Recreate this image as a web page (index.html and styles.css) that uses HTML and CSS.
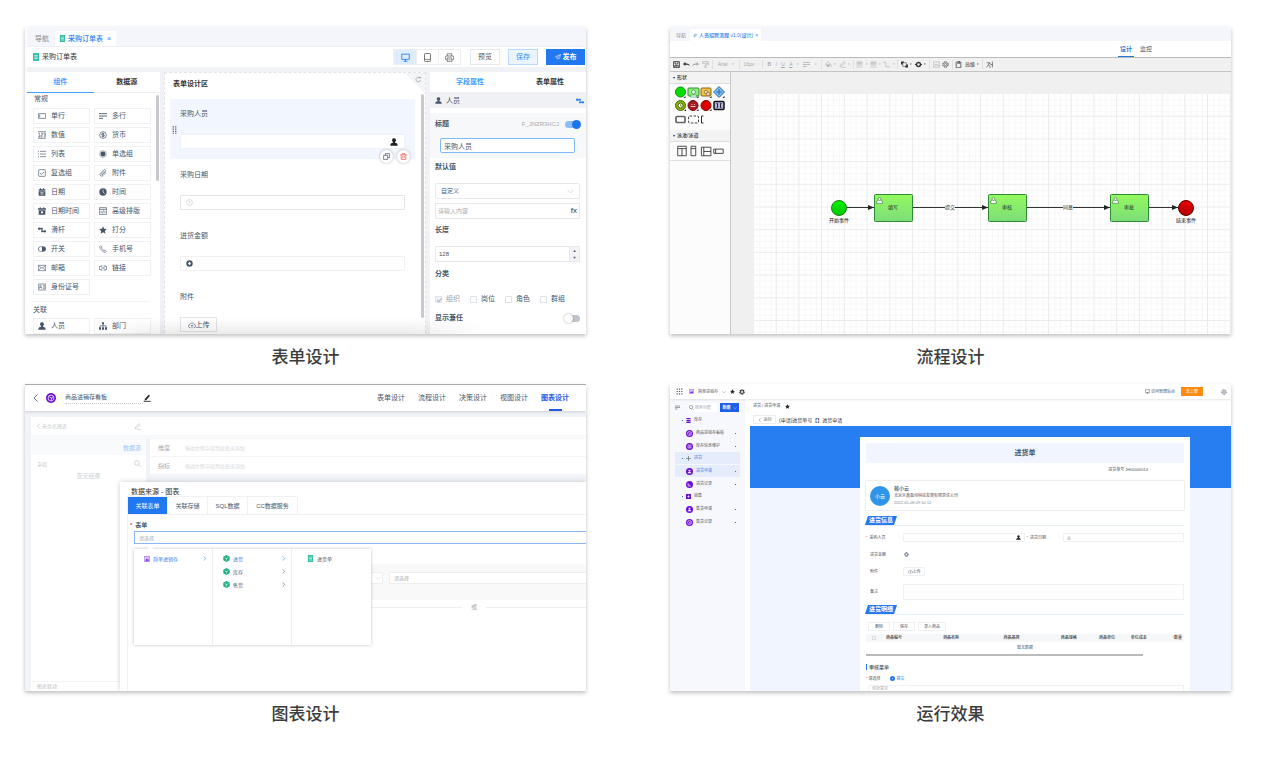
FILE: index.html
```html
<!DOCTYPE html>
<html lang="zh-CN">
<head>
    <meta charset="UTF-8">
    <meta name="viewport" content="width=device-width, initial-scale=1.0">
    <title>低代码平台</title>
    <link rel="stylesheet" href="styles.css">
</head>
<body>
    <!-- icon set -->
    <svg class="sprite" aria-hidden="true">
        <symbol id="doc" viewBox="0 0 12 12"><path d="M1.500 0h9v12h-9z" fill="#36bfa5"/><path d="M3.500 3.500h5M3.500 6h5M3.500 8.500h5" stroke="#fff"/></symbol>
        <symbol id="single" viewBox="0 0 12 12"><path d="M.5 2.500h11v7H.5zM2.500 4v4" fill="none" stroke="currentColor"/></symbol>
        <symbol id="multi" viewBox="0 0 12 12"><path d="M0 2.500h12M0 6h12M0 9.500h6" stroke="currentColor" stroke-width="1.300"/></symbol>
        <symbol id="number" viewBox="0 0 12 12"><path d="M.5 3h1.500v6M0 9h3.500M4.500 3h2.500v3H4.500v3H7M8.500 3H11v6H8.500M9 6h2M0 1h12M0 11h12" fill="none" stroke="currentColor" stroke-width=".9"/></symbol>
        <symbol id="money" viewBox="0 0 12 12"><circle cx="6" cy="6" r="5" fill="none" stroke="currentColor"/><path d="M8 4H5a1 1 0 0 0 0 2h2a1 1 0 0 1 0 2H4M6 2.500v7" fill="none" stroke="currentColor" stroke-width="1.200"/></symbol>
        <symbol id="list" viewBox="0 0 12 12"><path d="M3 2h9M3 6h9M3 10h9M0 2h1.500M0 6h1.500M0 10h1.500" stroke="currentColor"/></symbol>
        <symbol id="radio" viewBox="0 0 12 12"><circle cx="6" cy="6" r="5" fill="none" stroke="currentColor" stroke-width=".7"/><circle cx="6" cy="6" r="3.700" fill="currentColor"/></symbol>
        <symbol id="check" viewBox="0 0 12 12"><rect x="1" y="1" width="10" height="10" rx="1" fill="none" stroke="currentColor"/><path d="M3 6l2.200 2L9 4.500" fill="none" stroke="currentColor"/></symbol>
        <symbol id="clip" viewBox="0 0 12 12"><path d="M10.500 5L6 9.800a2.500 2.500 0 0 1-3.800-3.300L7 1.600a1.700 1.700 0 0 1 2.600 2.200L5.200 8.300a.8.8 0 0 1-1.200-1L7.800 3.500" fill="none" stroke="currentColor"/></symbol>
        <symbol id="date" viewBox="0 0 12 12"><path d="M1 2h2V.5h1.500V2h3V.5H9V2h2v2H1zM1 5h10v6.500H1z" fill="currentColor"/><path d="M3.500 7h5M3.500 9h5" stroke="#fff"/></symbol>
        <symbol id="datetime" viewBox="0 0 12 12"><path d="M0 2h2.500V.5H4V2h4V.5h1.500V2H12v2H0zM1 5h10v6.500H1z" fill="currentColor"/><circle cx="6" cy="8" r="1.700" fill="#fff"/></symbol>
        <symbol id="clock" viewBox="0 0 12 12"><circle cx="6" cy="6" r="5.500" fill="currentColor"/><path d="M6 2.500V6l2.500 2.500" fill="none" stroke="#fff"/></symbol>
        <symbol id="clock-line" viewBox="0 0 12 12"><circle cx="6" cy="6" r="5" fill="none" stroke="currentColor"/><path d="M6 3v3.500h2.500" fill="none" stroke="currentColor"/></symbol>
        <symbol id="html" viewBox="0 0 12 12"><path d="M.5 1h11v10H.5zM.5 3.500h11M4 5.500L2.500 7.300 4 9M8 5.500l1.500 1.800L8 9M6.700 5l-1.200 4.500" fill="none" stroke="currentColor"/></symbol>
        <symbol id="slider" viewBox="0 0 12 12"><path d="M0 4h7M5 8h7" stroke="currentColor" stroke-width="1.800"/><circle cx="2" cy="4" r="1.800" fill="currentColor"/><path d="M5 2.500h2v3H5zM5 6.500h2v3H5z" fill="currentColor"/><circle cx="10" cy="8" r="1.800" fill="currentColor"/></symbol>
        <symbol id="star" viewBox="0 0 12 12"><path d="M6 .3l1.700 3.900 4.200.4-3.200 2.800 1 4.200L6 9.400l-3.700 2.200 1-4.200L.1 4.600l4.200-.4z" fill="currentColor"/></symbol>
        <symbol id="switch" viewBox="0 0 12 12"><rect x=".5" y="2.500" width="11" height="7" rx="3.500" fill="none" stroke="currentColor"/><path d="M6 2.500h2a3.500 3.500 0 0 1 0 7H6z" fill="currentColor"/></symbol>
        <symbol id="phone" viewBox="0 0 12 12"><path d="M1 2.500L2.500 1l2 2.200-1 1.300 4 4 1.300-1 2.200 2-1.500 1.500C6 11 1 6 1 2.500z" fill="none" stroke="currentColor" stroke-width=".9"/></symbol>
        <symbol id="mail" viewBox="0 0 12 12"><path d="M.5 2h11v8H.5zM.5 2L6 6.500 11.500 2M.5 10l4-4.500M11.500 10l-4-4.500" fill="none" stroke="currentColor" stroke-width=".9"/></symbol>
        <symbol id="link" viewBox="0 0 12 12"><path d="M5 9H3a3 3 0 0 1 0-6h2M7 3h2a3 3 0 0 1 0 6H7M3.500 6h5" fill="none" stroke="currentColor" stroke-width="1.200"/></symbol>
        <symbol id="idcard" viewBox="0 0 12 12"><path d="M.5 1.500h11v9H.5zM7.500 4h3M7.500 6h3M7.500 8h3M2 8.500V6.500h3.500v2" fill="none" stroke="currentColor" stroke-width=".9"/><circle cx="3.700" cy="4.500" r="1.200" fill="none" stroke="currentColor" stroke-width=".8"/></symbol>
        <symbol id="person" viewBox="0 0 12 12"><path d="M6 .5a3 3 0 0 1 1.500 5.600v1.200C10 7.700 11.500 8.500 11.500 11.500H.5C.5 8.500 2 7.700 4.500 7.300V6.100A3 3 0 0 1 6 .5z" fill="currentColor"/></symbol>
        <symbol id="tree" viewBox="0 0 12 12"><path d="M4.500.5h3v3h-3zM0 8h3v3.500H0zM4.500 8h3v3.500h-3zM9 8h3v3.500H9z" fill="currentColor"/><path d="M6 3v5M1.500 8V5.700h9V8" fill="none" stroke="currentColor"/></symbol>
        <symbol id="monitor" viewBox="0 0 12 12"><path d="M1 1.500h10v7H1z" fill="none" stroke="currentColor" stroke-width="1.200"/><path d="M6 8v3M3.500 11h5" stroke="currentColor" stroke-width="1.200"/></symbol>
        <symbol id="tablet" viewBox="0 0 12 12"><rect x="2" y=".7" width="8" height="10.500" rx="1" fill="none" stroke="currentColor" stroke-width="1.200"/><path d="M2 8.500h8" stroke="currentColor"/></symbol>
        <symbol id="printer" viewBox="0 0 12 12"><path d="M3 4V1h6v3M3 9H1.500a1 1 0 0 1-1-1V5a1 1 0 0 1 1-1h9a1 1 0 0 1 1 1v3a1 1 0 0 1-1 1H9M3 6.500h6v5H3zM4.500 9h3" fill="none" stroke="currentColor"/></symbol>
        <symbol id="send" viewBox="0 0 12 12"><path d="M11 1L1 5.500l3 1.500 1 3.500 2-2.500 2 1zM11 1L4 7" fill="none" stroke="currentColor"/></symbol>
        <symbol id="copy" viewBox="0 0 12 12"><path d="M1 4h7v7H1zM4 4V1h7v7H8" fill="none" stroke="currentColor" stroke-width="1.200"/></symbol>
        <symbol id="trash" viewBox="0 0 12 12"><path d="M.5 3h11M4 3V1h4v2M2 3v8h8V3M4.700 5v4M7.300 5v4" fill="none" stroke="currentColor" stroke-width="1.200"/></symbol>
        <symbol id="cloud" viewBox="0 0 12 12"><path d="M3.500 10a2.500 2.500 0 0 1-.5-5 3.200 3.200 0 0 1 6 0 2.500 2.500 0 0 1-.5 5M6 11V6M4.500 7.500L6 6l1.500 1.500" fill="none" stroke="currentColor" stroke-width=".9"/></symbol>
        <symbol id="coin" viewBox="0 0 12 12"><circle cx="6" cy="6" r="5.500" fill="currentColor"/><path d="M6 3l2.500 3L6 9 3.500 6z" fill="#fff"/></symbol>
        <symbol id="down" viewBox="0 0 12 12"><path d="M1 3.500l5 5 5-5" fill="none" stroke="currentColor"/></symbol>
        <symbol id="right" viewBox="0 0 12 12"><path d="M4 1l5 5-5 5" fill="none" stroke="currentColor" stroke-width="1.400"/></symbol>
        <symbol id="left" viewBox="0 0 12 12"><path d="M8.500.5L3 6l5.500 5.500" fill="none" stroke="currentColor" stroke-width="1.200"/></symbol>
        <symbol id="refresh" viewBox="0 0 12 12"><path d="M7.500 2.500A4 4 0 1 0 9.500 7M8.500 1v3.500M7 2.800h4" fill="none" stroke="currentColor" stroke-width="1.200"/></symbol>
        <symbol id="drag" viewBox="0 0 8 12"><path d="M1 0h2v2H1zM5 0h2v2H5zM1 3.500h2v2H1zM5 3.500h2v2H5zM1 7h2v2H1zM5 7h2v2H5zM1 10.500h2v1.500H1zM5 10.500h2v1.500H5z" fill="currentColor"/></symbol>
        <symbol id="pen" viewBox="0 0 12 12"><path d="M8.500 1l2 1.800L5 9l-2.800.8L3 7z" fill="currentColor"/><path d="M1 11h10.500" stroke="currentColor" stroke-width="1.300"/></symbol>
        <symbol id="pen-line" viewBox="0 0 12 12"><path d="M8.500 1l2 1.800L4.500 9l-2.800.8.800-2.800zM5 11h6.500" fill="none" stroke="currentColor"/></symbol>
        <symbol id="search" viewBox="0 0 12 12"><circle cx="5" cy="5" r="4" fill="none" stroke="currentColor" stroke-width="1.200"/><path d="M8 8l3.500 3.500" stroke="currentColor" stroke-width="1.200"/></symbol>
        <symbol id="purple" viewBox="0 0 12 12"><circle cx="6" cy="6" r="6" fill="#6a0fd0"/><circle cx="6" cy="6" r="3.500" fill="none" stroke="#fff" stroke-width=".9"/><path d="M4 4.500l2.500 1.500V9M6.500 6L9 4.500" fill="none" stroke="#fff" stroke-width=".9"/></symbol>
        <symbol id="purple-person" viewBox="0 0 12 12"><circle cx="6" cy="6" r="6" fill="#6a0fd0"/><circle cx="6" cy="4.500" r="1.700" fill="#fff"/><path d="M3 9c0-3 6-3 6 0z" fill="#fff"/></symbol>
        <symbol id="purple-doc" viewBox="0 0 12 12"><circle cx="6" cy="6" r="6" fill="#6a0fd0"/><path d="M3.500 3.500h5v5h-5zM5 5.500h2M5 7h2" fill="none" stroke="#fff"/></symbol>
        <symbol id="purple-log" viewBox="0 0 12 12"><circle cx="6" cy="6" r="6" fill="#6a0fd0"/><path d="M3.500 3.500v5h5M5 7.500v-2M7 7.500v-1" fill="none" stroke="#fff"/></symbol>
        <symbol id="stack" viewBox="0 0 12 12"><path d="M1 0h10v3H1zM1 4.500h10v3H1zM1 9h10v3H1z" fill="#6a0fd0"/></symbol>
        <symbol id="app" viewBox="0 0 12 12"><path d="M.5 1h11v10H.5z" fill="#dcc4fa" stroke="#8f42ea"/><path d="M2.500 9.500l2.500-4 1.500 2L8 5l2 4.500z" fill="#7a22e0"/></symbol>
        <symbol id="node" viewBox="0 0 12 12"><path d="M6 0l5.500 3v6L6 12 .5 9V3z" fill="#20b07e"/><path d="M3 4.500L6 6l3-1.500M6 6v3.500" fill="none" stroke="#fff"/></symbol>
        <symbol id="gear" viewBox="0 0 12 12"><circle cx="6" cy="6" r="4.300" fill="none" stroke="currentColor" stroke-width="2.200" stroke-dasharray="2.400 1"/><circle cx="6" cy="6" r="3" fill="none" stroke="currentColor" stroke-width="1.400"/></symbol>
        <symbol id="gear-line" viewBox="0 0 12 12"><circle cx="6" cy="6" r="4.500" fill="none" stroke="currentColor" stroke-width="1.600" stroke-dasharray="2.600 .9"/><circle cx="6" cy="6" r="2" fill="none" stroke="currentColor"/></symbol>
        <symbol id="grid9" viewBox="0 0 12 12"><path d="M1 1h2v2H1zM5 1h2v2H5zM9 1h2v2H9zM1 5h2v2H1zM5 5h2v2H5zM9 5h2v2H9zM1 9h2v2H1zM5 9h2v2H5zM9 9h2v2H9z" fill="currentColor"/></symbol>
        <symbol id="flow" viewBox="0 0 12 12"><path d="M3 11V4h6M6 1l3 3-3 3M1 7h7" fill="none" stroke="currentColor"/></symbol>
        <symbol id="save" viewBox="0 0 12 12"><path d="M1 1h10v10H1zM3.500 1v4h5V1M3 11V7.500h6V11M5.500 8v2.500" fill="none" stroke="currentColor" stroke-width="1.400"/></symbol>
        <symbol id="undo" viewBox="0 0 12 12"><path d="M0 5l4-3.500v2.300c4 0 7 1.200 8 5.200-2-2-4-2.500-8-2.500v2z" fill="currentColor"/></symbol>
        <symbol id="redo" viewBox="0 0 12 12"><path d="M12 5L8 1.500v2.300c-4 0-7 1.200-8 5.200 2-2 4-2.500 8-2.500v2z" fill="currentColor"/></symbol>
        <symbol id="brush" viewBox="0 0 12 12"><path d="M1 1h9v3H1zM10 2.500h1.500v4H6v1M5 7.500h2V12H5z" fill="none" stroke="currentColor"/></symbol>
        <symbol id="bucket" viewBox="0 0 12 12"><path d="M5 1l5 5-4.500 4.500L1 6zM10.500 7.500l1 3" fill="none" stroke="currentColor"/><path d="M1.500 6h8L5.500 10z" fill="currentColor"/></symbol>
        <symbol id="dashes" viewBox="0 0 12 12"><path d="M1 2h10M1 5h10" stroke="currentColor" stroke-width="1.500"/><path d="M1 8h10M1 10.500h10" stroke="currentColor" stroke-dasharray="2 1"/></symbol>
        <symbol id="elbow" viewBox="0 0 12 12"><path d="M0 2h5v8h7" fill="none" stroke="currentColor"/></symbol>
        <symbol id="front" viewBox="0 0 12 12"><path d="M0 1h5v5H0zM7 6h5v5H7z" fill="currentColor"/><path d="M3 3h6v6H3z" fill="#fff" stroke="currentColor"/></symbol>
        <symbol id="target" viewBox="0 0 12 12"><circle cx="6" cy="6" r="3.500" fill="none" stroke="currentColor" stroke-width="2.600"/><path d="M0 6h3M9 6h3" stroke="currentColor" stroke-width="2"/></symbol>
        <symbol id="image" viewBox="0 0 12 12"><path d="M.5 1.500h11v9H.5zM2 9l3-4 2 3 1.500-2L11 9" fill="none" stroke="currentColor"/></symbol>
        <symbol id="paste" viewBox="0 0 12 12"><path d="M2 2h8v9.500H2zM4 .5h4V4H4" fill="none" stroke="currentColor" stroke-width="1.200"/></symbol>
        <symbol id="run" viewBox="0 0 12 12"><path d="M1 3h5l-2 4 3 2v3M4 7l-3 4M6 3l2 3h3M11 1v10" fill="none" stroke="currentColor"/></symbol>
        <symbol id="user-task" viewBox="0 0 12 12"><path d="M4 5.500L1 7.500V11h10V7.500L8 5.500" fill="#fff" stroke="#2d6b33"/><circle cx="6" cy="3.500" r="2.500" fill="#fff" stroke="#2d6b33"/></symbol>
    </svg>

    <main class="gallery">
        <figure class="feature">
            <div class="shot form-designer">
                <div class="tabbar">
                    <span class="tab">导航</span>
                    <span class="tab active"><svg class="ico7"><use href="#doc"/></svg>采购订单表<i>×</i></span>
                </div>
                <header class="titlebar">
                    <svg class="ico8"><use href="#doc"/></svg>
                    <span class="name">采购订单表</span>
                    <div class="devices">
                        <button class="on" aria-label="桌面"><svg class="ico9"><use href="#monitor"/></svg></button>
                        <button aria-label="平板"><svg class="ico9"><use href="#tablet"/></svg></button>
                        <button aria-label="打印"><svg class="ico9"><use href="#printer"/></svg></button>
                    </div>
                    <button class="btn">预览</button>
                    <button class="btn light">保存</button>
                    <button class="btn primary"><svg class="ico6"><use href="#send"/></svg>发布</button>
                </header>
                <div class="workspace">
                    <aside class="components">
                        <div class="panel-tabs"><a href="#" class="on">组件</a><a href="#">数据源</a></div>
                        <h4>常规</h4>
                        <div class="widgets">
                            <span><svg><use href="#single"/></svg>单行</span>
                            <span><svg><use href="#multi"/></svg>多行</span>
                            <span><svg><use href="#number"/></svg>数值</span>
                            <span><svg><use href="#money"/></svg>货币</span>
                            <span><svg><use href="#list"/></svg>列表</span>
                            <span><svg><use href="#radio"/></svg>单选组</span>
                            <span><svg><use href="#check"/></svg>复选组</span>
                            <span><svg><use href="#clip"/></svg>附件</span>
                            <span><svg><use href="#date"/></svg>日期</span>
                            <span><svg><use href="#clock"/></svg>时间</span>
                            <span><svg><use href="#datetime"/></svg>日期时间</span>
                            <span><svg><use href="#html"/></svg>高级排版</span>
                            <span><svg><use href="#slider"/></svg>滑杆</span>
                            <span><svg><use href="#star"/></svg>打分</span>
                            <span><svg><use href="#switch"/></svg>开关</span>
                            <span><svg><use href="#phone"/></svg>手机号</span>
                            <span><svg><use href="#mail"/></svg>邮箱</span>
                            <span><svg><use href="#link"/></svg>链接</span>
                            <span><svg><use href="#idcard"/></svg>身份证号</span>
                        </div>
                        <h4 class="second">关联</h4>
                        <div class="widgets">
                            <span><svg><use href="#person"/></svg>人员</span>
                            <span><svg><use href="#tree"/></svg>部门</span>
                        </div>
                        <i class="scroll"></i>
                    </aside>
                    <section class="canvas">
                        <h3>表单设计区</h3>
                        <div class="field selected">
                            <svg class="grip"><use href="#drag"/></svg>
                            <label for="buyer">采购人员</label>
                            <div class="box"><input id="buyer"><svg class="ico8 end"><use href="#person"/></svg></div>
                            <div class="tools">
                                <button aria-label="复制"><svg class="ico7"><use href="#copy"/></svg></button>
                                <button class="del" aria-label="删除"><svg class="ico7"><use href="#trash"/></svg></button>
                            </div>
                        </div>
                        <div class="field">
                            <label for="buydate">采购日期</label>
                            <div class="box"><svg class="ico7 pale"><use href="#clock-line"/></svg><input id="buydate"></div>
                        </div>
                        <div class="field">
                            <label for="amount">进货金额</label>
                            <div class="box thin"><svg class="ico7"><use href="#coin"/></svg><input id="amount"></div>
                        </div>
                        <div class="field">
                            <label for="upload">附件</label>
                            <button id="upload" class="upload"><svg class="ico8"><use href="#cloud"/></svg>上传</button>
                        </div>
                        <span class="corner"><svg class="ico7"><use href="#refresh"/></svg></span>
                        <i class="scroll"></i>
                    </section>
                    <aside class="props">
                        <div class="panel-tabs"><a href="#" class="on">字段属性</a><a href="#">表单属性</a></div>
                        <div class="who"><svg class="ico7"><use href="#person"/></svg>人员<svg class="ico8 swap"><use href="#slider"/></svg></div>
                        <div class="title-prop">
                            <div class="line"><label for="title">标题</label><small>F_JNZR3HCJ</small><input type="checkbox" class="toggle" checked aria-label="显示标题"></div>
                            <input id="title" value="采购人员">
                        </div>
                        <div class="prop-list">
                            <label for="default">默认值</label>
                            <div class="selectbox"><select id="default"><option>自定义</option></select><svg class="ico7"><use href="#down"/></svg></div>
                            <div class="fxbox"><input placeholder="请输入内容" aria-label="内容"><b>fx</b></div>
                            <label for="len">长度</label>
                            <div class="numbox"><input id="len" value="128"><span><i>▲</i><i>▼</i></span></div>
                            <h5>分类</h5>
                            <div class="checks">
                                <label class="off"><input type="checkbox" checked disabled>组织</label>
                                <label><input type="checkbox">岗位</label>
                                <label><input type="checkbox">角色</label>
                                <label><input type="checkbox">群组</label>
                            </div>
                            <div class="line"><label for="both">显示兼任</label><input id="both" type="checkbox" class="toggle"></div>
                        </div>
                    </aside>
                </div>
            </div>
            <figcaption>表单设计</figcaption>
        </figure>

        <figure class="feature">
            <div class="shot flow-designer">
                <div class="tabbar">
                    <span class="tab">导航</span>
                    <span class="tab active"><svg class="ico5"><use href="#flow"/></svg>人员招聘流程 v1.0(设计)<i>×</i></span>
                </div>
                <nav class="modes"><a href="#" class="on">设计</a><a href="#">监控</a></nav>
                <div class="toolbar">
                    <div class="g42"><svg class="dark"><use href="#save"/></svg><svg class="dark"><use href="#undo"/></svg><svg><use href="#redo"/></svg><svg><use href="#brush"/></svg></div>
                    <div class="g27"><span>Arial</span><i>▾</i></div>
                    <div class="g22"><span>16px</span><i>⁝</i></div>
                    <div class="g59"><b>B</b><em>I</em><u>U</u><u>A</u><i>▾</i><svg><use href="#multi"/></svg><i>▾</i></div>
                    <div class="g32"><svg><use href="#bucket"/></svg><i>▾</i><svg><use href="#pen-line"/></svg><i>▾</i></div>
                    <div class="g44"><svg><use href="#dashes"/></svg><i>▾</i><svg><use href="#dashes"/></svg><i>▾</i><svg><use href="#elbow"/></svg><i>▾</i></div>
                    <div class="g32 dark"><svg><use href="#front"/></svg><i>▾</i><svg><use href="#target"/></svg><i>▾</i></div>
                    <div class="g22"><svg><use href="#image"/></svg><svg class="dark"><use href="#gear-line"/></svg></div>
                    <div class="g30 dark"><svg><use href="#paste"/></svg><span>高级</span><i>▾</i></div>
                    <div class="dark"><svg><use href="#run"/></svg></div>
                </div>
                <div class="stage">
                    <aside class="palette">
                        <h4>形状</h4>
                        <svg class="shapes" viewBox="0 1 60 46" width="60" height="46">
                            <g stroke-width="1">
                                <circle cx="10.500" cy="9" r="5" fill="#00e000" stroke="#118611"/>
                                <rect x="18" y="5" width="11" height="8" rx="1" fill="#8af27b" stroke="#2c8c33"/><circle cx="23.500" cy="9" r="2" fill="#fff" stroke="#2c8c33" stroke-width=".7"/><path d="M20.500 14v-2l6 0v2z" fill="#fff" stroke="#2c8c33" stroke-width=".6"/>
                                <rect x="31" y="5" width="10" height="8" rx="1" fill="#f4c445" stroke="#8b6414"/><circle cx="36" cy="9" r="1.800" fill="#ddd" stroke="#8b6414" stroke-width=".7"/><circle cx="38" cy="11" r="1.800" fill="#ddd" stroke="#8b6414" stroke-width=".7"/>
                                <path d="M49 3.500l5.500 5.500-5.500 5.500L43.500 9z" fill="#7cc0f5" stroke="#2b6ca8"/><path d="M49 6v6M46 9h6" stroke="#2b6ca8"/>
                                <circle cx="10.500" cy="22.500" r="5" fill="#8bb500" stroke="#496800"/><circle cx="10.500" cy="22.500" r="2.500" fill="#fff" stroke="#496800"/><path d="M10.500 21v2H12" fill="none" stroke="#496800" stroke-width=".6"/>
                                <circle cx="23" cy="22.500" r="5" fill="#a81b22" stroke="#6b0c10"/><path d="M20.500 23.500h5M21.500 21.500h1M24 21.500h1" stroke="#f0c0c0"/>
                                <circle cx="36" cy="22.500" r="5" fill="#de0000" stroke="#7c0000"/>
                                <rect x="44" y="18.500" width="10" height="8" rx="1" fill="#b8b6e6" stroke="#111" stroke-width="1.500"/><path d="M46.500 20.500h1v4h-1M51.500 20.500h-1v4h1" fill="none" stroke="#222"/>
                                <rect x="6" y="33.500" width="9" height="6" rx="1" fill="#fff" stroke="#666" stroke-width="1.700"/>
                                <rect x="18.500" y="33" width="10" height="7" rx="1" fill="none" stroke="#444" stroke-dasharray="2.500 1.500"/>
                                <path d="M33.500 33H31.500v7h2" fill="none" stroke="#333"/>
                            </g>
                            <path d="M15.500 13v2h-2zM28.500 13v2h-2zM41.500 13v2h-2zM54.500 13v2h-2zM16 26v2h-2zM28.500 26v2h-2zM41.500 26v2h-2z" fill="#222"/>
                        </svg>
                        <h4>泳池/泳道</h4>
                        <svg class="lanes" viewBox="0 0 60 19" width="60" height="19"><path d="M6.500 4.500h9v10h-9zM6.500 7h9M11 7v7.500M20.500 4.500h5v10h-5zM20.500 7h5M31.500 5.500h10v9h-10zM34 5.500v9M34 10h7.500M44.500 7.500h10v4.500h-10zM46.500 7.500V12" fill="none" stroke="#444"/></svg>
                    </aside>
                    <div class="paper-area">
                        <svg class="paper" width="100%" height="240">
                            <defs>
                                <pattern id="cells" width="22.700" height="22.700" patternUnits="userSpaceOnUse">
                                    <path d="M5.700 0v22.700M11.400 0v22.700M17 0v22.700M0 5.700h22.700M0 11.400h22.700M0 17h22.700" stroke="#f7f7f7"/>
                                    <path d="M22.200 0v22.200H0" fill="none" stroke="#ebebeb"/>
                                </pattern>
                                <linearGradient id="leaf" x2="0" y2="1"><stop offset="0" stop-color="#93f95f"/><stop offset="1" stop-color="#7cdd7a"/></linearGradient>
                                <linearGradient id="go" x2="0" y2="1"><stop offset="0" stop-color="#00f000"/><stop offset="1" stop-color="#00c800"/></linearGradient>
                                <linearGradient id="stop" x2="0" y2="1"><stop offset="0" stop-color="#e80000"/><stop offset="1" stop-color="#b40000"/></linearGradient>
                                <marker id="arrow" viewBox="0 0 6 5" refX="6" refY="2.500" markerWidth="6" markerHeight="5" markerUnits="userSpaceOnUse" orient="auto"><path d="M0 0l6 2.500L0 5z" fill="#222"/></marker>
                            </defs>
                            <rect width="100%" height="240" fill="#fff"/>
                            <rect width="100%" height="240" fill="url(#cells)"/>
                            <g stroke="#333">
                                <path d="M93 113.500h27" marker-end="url(#arrow)"/>
                                <path d="M158 113.500h76" marker-end="url(#arrow)"/>
                                <path d="M272 113.500h84" marker-end="url(#arrow)"/>
                                <path d="M394 113.500h30" marker-end="url(#arrow)"/>
                            </g>
                            <circle cx="85" cy="114" r="7.500" fill="url(#go)" stroke="#118611"/>
                            <circle cx="432" cy="114" r="7.500" fill="url(#stop)" stroke="#5c0000"/>
                            <g fill="url(#leaf)" stroke="#2f8a36">
                                <rect x="120.500" y="100.500" width="38" height="27" rx="1"/>
                                <rect x="234.500" y="100.500" width="38" height="27" rx="1"/>
                                <rect x="356.500" y="100.500" width="38" height="27" rx="1"/>
                            </g>
                            <use href="#user-task" x="122" y="103" width="7" height="7"/>
                            <use href="#user-task" x="236" y="103" width="7" height="7"/>
                            <use href="#user-task" x="358" y="103" width="7" height="7"/>
                            <path d="M191 110h10v7h-10zM309 110h10v7h-10z" fill="#fff"/>
                            <g class="labels">
                                <text x="139" y="115">填写</text>
                                <text x="253" y="115">审核</text>
                                <text x="375" y="115">审批</text>
                                <text x="196" y="115">提交</text>
                                <text x="314" y="115">同意</text>
                                <text x="85" y="128">开始事件</text>
                                <text x="432" y="128">结束事件</text>
                            </g>
                        </svg>
                    </div>
                </div>
            </div>
            <figcaption>流程设计</figcaption>
        </figure>

        <figure class="feature">
            <div class="shot chart-designer">
                <header>
                    <svg class="ico8"><use href="#left"/></svg>
                    <svg class="ico10"><use href="#purple"/></svg>
                    <span class="name">商品进销存看板</span>
                    <svg class="ico8 black"><use href="#pen"/></svg>
                    <nav><a href="#">表单设计</a><a href="#">流程设计</a><a href="#">决策设计</a><a href="#">视图设计</a><a href="#" class="on">图表设计</a></nav>
                </header>
                <div class="chart-body">
                    <div class="chart-name"><svg class="ico6"><use href="#left"/></svg><span>未命名图表</span><svg class="ico7"><use href="#pen-line"/></svg></div>
                    <div class="chart-cols">
                        <div class="source">
                            <div class="src-head">数据源</div>
                            <div class="src-field">字段<svg class="ico7"><use href="#search"/></svg></div>
                            <p>查无结果</p>
                            <div class="src-foot">图表联动</div>
                        </div>
                        <div class="dims">
                            <div><b>维度</b>拖动左侧字段到此处来添加</div>
                            <div><b>指标</b>拖动左侧字段到此处来添加</div>
                        </div>
                    </div>
                </div>
                <section class="dialog">
                    <h3>数据来源 - 图表</h3>
                    <div class="inner">
                        <div class="src-tabs"><button class="on">关联表单</button><button>关联存储</button><button>SQL数据</button><button class="wide">CC数据服务</button></div>
                        <label for="form"><i>*</i>表单</label>
                        <input id="form" class="pick" placeholder="请选择">
                        <div class="filter">
                            <select aria-label="条件"><option></option></select><svg class="ico6"><use href="#down"/></svg>
                            <input placeholder="请选择" aria-label="值">
                        </div>
                        <div class="or"><span>或</span></div>
                        <div class="cascade">
                            <ul><li class="on"><svg class="ico6"><use href="#app"/></svg>简单进销存<svg class="ico5"><use href="#right"/></svg></li></ul>
                            <ul>
                                <li class="on"><svg class="ico7"><use href="#node"/></svg>进货<svg class="ico5"><use href="#right"/></svg></li>
                                <li><svg class="ico7"><use href="#node"/></svg>库存<svg class="ico5"><use href="#right"/></svg></li>
                                <li><svg class="ico7"><use href="#node"/></svg>售货<svg class="ico5"><use href="#right"/></svg></li>
                            </ul>
                            <ul class="last"><li><svg class="ico7"><use href="#doc"/></svg>进货单</li></ul>
                        </div>
                    </div>
                </section>
            </div>
            <figcaption>图表设计</figcaption>
        </figure>

        <figure class="feature">
            <div class="shot runtime">
                <header>
                    <svg class="ico7"><use href="#grid9"/></svg>
                    <svg class="ico5"><use href="#app"/></svg>
                    <span>简单进销存</span>
                    <svg class="ico4"><use href="#down"/></svg>
                    <svg class="ico5 black"><use href="#star"/></svg>
                    <svg class="ico6 black"><use href="#gear"/></svg>
                    <a href="#"><svg class="ico5"><use href="#monitor"/></svg>访问管理后台</a>
                    <button>去上架</button>
                    <svg class="ico6"><use href="#gear-line"/></svg>
                </header>
                <div class="run-body">
                    <aside class="menu">
                        <div class="find">
                            <svg class="ico5"><use href="#multi"/></svg>
                            <div><svg class="ico5"><use href="#search"/></svg><input placeholder="搜索功能" aria-label="搜索"></div>
                            <button>新建<svg class="ico4"><use href="#down"/></svg></button>
                        </div>
                        <ul>
                            <li class="group"><i></i><svg class="ico5"><use href="#stack"/></svg>库存</li>
                            <li><svg class="ico7"><use href="#purple"/></svg>商品进销存看板<i></i></li>
                            <li><svg class="ico7"><use href="#purple-doc"/></svg>库存信息维护<i></i></li>
                            <li class="group on"><i></i><svg class="ico5" viewBox="0 0 12 12"><path d="M6 0v12M0 6h12" stroke="#55617a" stroke-width="1.500"/></svg>进货</li>
                            <li class="on"><svg class="ico7"><use href="#purple-person"/></svg>进货申请<i></i></li>
                            <li><svg class="ico7"><use href="#purple-log"/></svg>进货记录<i></i></li>
                            <li class="group"><i></i><svg class="ico5" viewBox="0 0 12 12"><path d="M0 0h12v12H0z" fill="#6a0fd0"/><path d="M6 3v6M3 6h6" stroke="#fff" stroke-width="1.500"/></svg>销售</li>
                            <li><svg class="ico7"><use href="#purple-person"/></svg>售货申请<i></i></li>
                            <li><svg class="ico7"><use href="#purple"/></svg>售货记录<i></i></li>
                        </ul>
                    </aside>
                    <section class="page">
                        <div class="crumbs">进货 / 进货申请<svg class="ico5 black"><use href="#star"/></svg></div>
                        <div class="page-title"><button><svg class="ico4"><use href="#left"/></svg>返回</button>(申请)进货单号【】进货申请</div>
                        <div class="backdrop">
                            <form class="sheet">
                                <h2>进货单</h2>
                                <p class="serial">进货单号 JH00000014</p>
                                <div class="user">
                                    <span class="avatar">小云</span>
                                    <div><b>赖小云</b><p>北京炎黄盈动科技发展有限责任公司</p><p class="dim">2022-05-08 09:10:12</p></div>
                                </div>
                                <h3><span>进货信息</span></h3>
                                <div class="rows">
                                    <label for="r1"><i>*</i>采购人员</label>
                                    <div class="inbox"><input id="r1"><svg class="ico5 black"><use href="#person"/></svg></div>
                                    <label for="r2" class="mid"><i>*</i>进货日期</label>
                                    <div class="inbox"><svg class="ico4 pale"><use href="#date"/></svg><input id="r2"></div>
                                    <label>进货金额</label>
                                    <div class="full"><svg class="ico5"><use href="#gear"/></svg></div>
                                    <label for="r4">附件</label>
                                    <div class="full"><button type="button" id="r4"><svg class="ico5"><use href="#cloud"/></svg>上传</button></div>
                                    <label for="r5">备注</label>
                                    <textarea id="r5" class="full"></textarea>
                                </div>
                                <h3 class="detail"><span>进货明细</span></h3>
                                <div class="acts"><button type="button">删除</button><button type="button">保存</button><button type="button" class="wide">录入商品</button></div>
                                <table>
                                    <thead><tr><th class="c1"><input type="checkbox" aria-label="全选"></th><th class="c2">商品编号</th><th class="c3">商品名称</th><th class="c2">商品品牌</th><th class="c4">商品规格</th><th class="c5">商品单位</th><th class="c5">单位成本</th><th class="c6"><i>*</i>数量</th></tr></thead>
                                    <tbody><tr><td colspan="8">暂无数据</td></tr></tbody>
                                </table>
                                <div class="hscroll"></div>
                                <h4>审核菜单</h4>
                                <div class="choose"><i>*</i>请选择<label><input type="radio" name="act" checked>提交</label></div>
                                <textarea class="opinion" placeholder="审批意见" aria-label="审批意见"></textarea>
                            </form>
                        </div>
                    </section>
                </div>
            </div>
            <figcaption>运行效果</figcaption>
        </figure>
    </main>
</body>
</html>
```
FILE: styles.css
```css
* {
    box-sizing: border-box;
}
body {
    margin: 0;
    background: #fff;
    font-family: "Liberation Sans", "Noto Sans CJK SC", sans-serif;
    color: #475669;
}
button, input, select, textarea {
    font-family: inherit;
    font-size: inherit;
    line-height: inherit;
    color: inherit;
    margin: 0;
    padding: 0;
    border: 0;
    border-radius: 0;
    background: none;
    outline: none;
    appearance: none;
    min-width: 0;
    resize: none;
}
a {
    color: inherit;
    text-decoration: none;
}
h2, h3, h4, h5, p, ul, figure {
    margin: 0;
    padding: 0;
    list-style: none;
}
i {
    font-style: normal;
}
svg {
    display: block;
    flex: none;
}
.sprite {
    position: absolute;
    width: 0;
    height: 0;
}
.ico4 { width: 4px; height: 4px; }
.ico5 { width: 5px; height: 5px; }
.ico6 { width: 6px; height: 6px; }
.ico7 { width: 7px; height: 7px; }
.ico8 { width: 8px; height: 8px; }
.ico9 { width: 9px; height: 9px; }
.ico10 { width: 10px; height: 10px; }
.pale { color: #c3c8d0; }
.black { color: #222; }

/* gallery */
.gallery {
    display: grid;
    grid-template-columns: 1fr 1fr;
    column-gap: 84px;
    padding: 27px 49px 16px 25px;
}
.feature {
    display: flex;
    flex-direction: column;
    min-width: 0;
}
.shot {
    position: relative;
    height: 307px;
    overflow: hidden;
    background: #fff;
    box-shadow: 0 2px 4px rgba(0, 0, 0, 0.25);
}
figcaption {
    height: 50px;
    line-height: 48px;
    font-size: 17px;
    font-weight: 500;
    text-align: center;
    color: #3d3d3d;
}
.tabbar {
    display: flex;
    align-items: flex-end;
    background: #f4f6fb;
}
.tab {
    display: flex;
    align-items: center;
    color: #888;
}
.tab.active {
    background: #fff;
    color: #2a80f0;
}

/* form designer */
.form-designer {
    font-size: 7px;
    line-height: 10px;
    border-left: 2px solid #fbfbfc;
}
.form-designer::after {
    content: "";
    position: absolute;
    left: 60px;
    right: 100px;
    bottom: 0;
    height: 16px;
    background: linear-gradient(rgba(0, 0, 0, 0), rgba(0, 0, 0, 0.08));
    mask-image: linear-gradient(90deg, transparent, #000 20%, #000 80%, transparent);
    pointer-events: none;
}
.form-designer .tabbar {
    height: 20px;
    padding-left: 8px;
    gap: 6px;
    border-bottom: 1px solid #eef0f3;
}
.form-designer .tab {
    height: 15px;
}
.form-designer .tab.active {
    gap: 2px;
    padding: 0 5px 0 4px;
    font-weight: 500;
}
.form-designer .tab i {
    margin-left: 2px;
}
.titlebar {
    display: flex;
    align-items: center;
    height: 20px;
    padding: 0 1px 0 5px;
    gap: 8px;
}
.titlebar .name {
    margin-left: -6px;
    flex: 1;
    color: #333;
}
.devices {
    display: flex;
    margin-right: 1px;
    border: 1px solid #eceef1;
}
.devices button {
    display: flex;
    align-items: center;
    justify-content: center;
    width: 22px;
    height: 14px;
    color: #666;
    border-left: 1px solid #eceef1;
}
.devices .on {
    background: #deecff;
    color: #2a80f0;
}
.btn {
    display: flex;
    align-items: center;
    justify-content: center;
    gap: 2px;
    width: 30px;
    height: 16px;
    border: 1px solid #e6e8eb;
    color: #555;
}
.btn.light {
    background: #ecf5ff;
    border-color: #b8d8fc;
    color: #2a90f5;
}
.btn.primary {
    width: 39px;
    background: #2178f0;
    border-color: #2178f0;
    color: #fff;
    font-weight: bold;
}
.workspace {
    display: grid;
    grid-template-columns: 133px 1fr 156px;
    column-gap: 4px;
    height: 267px;
    padding-top: 5px;
    background: #f0f2f5;
}
.components, .canvas, .props {
    position: relative;
    background: #fff;
    min-width: 0;
}
.panel-tabs {
    display: flex;
    height: 21px;
    border-bottom: 1px solid #eceef1;
    line-height: 20px;
    font-weight: bold;
    text-align: center;
    color: #333;
}
.panel-tabs a {
    flex: 1;
    height: 21px;
}
.props .panel-tabs a {
    flex: none;
    width: 80px;
}
.props .panel-tabs {
    overflow: hidden;
}
.panel-tabs .on {
    color: #409eff;
    border-bottom: 1px solid #409eff;
}
.components h4 {
    margin: 1px 0 4px 7px;
    font-weight: normal;
}
.components .second {
    margin: 6px 10px 3px 6px;
    padding-top: 3px;
    border-top: 1px solid #f2f3f5;
}
.widgets {
    display: grid;
    grid-template-columns: 57px 57px;
    grid-auto-rows: 16px;
    gap: 3px 4px;
    margin-left: 6px;
}
.widgets span {
    display: flex;
    align-items: center;
    gap: 5px;
    padding-left: 4px;
    border: 1px solid #f0f1f3;
}
.widgets svg {
    width: 8px;
    height: 8px;
}
.scroll {
    position: absolute;
    width: 3px;
    border-radius: 2px;
    background: #c8c9cc;
}
.components .scroll {
    right: 1px;
    top: 23px;
    height: 86px;
}
.canvas {
    padding: 0 10px 0 5px;
    border: 1px dashed #e0e3e8;
    border-bottom: 0;
}
.canvas h3 {
    height: 26px;
    padding-left: 3px;
    line-height: 22px;
    font-size: 7px;
    color: #333;
}
.field {
    position: relative;
    height: 60px;
    margin-bottom: 1px;
    padding: 10px;
}
.field.selected {
    background: #f2f7ff;
}
.field label {
    display: block;
    margin-bottom: 15px;
}
.box {
    display: flex;
    align-items: center;
    height: 15px;
    padding: 0 6px 0 5px;
    background: #fff;
    border: 1px solid #e3e5e8;
    border-radius: 1px;
}
.selected .box, .box.thin {
    border-color: #f0f1f3;
}
.box input {
    flex: 1;
}
.box .end {
    color: #222;
}
.grip {
    position: absolute;
    left: 2px;
    top: 27px;
    width: 5px;
    height: 8px;
}
.tools {
    position: absolute;
    right: 5px;
    bottom: -4px;
    display: flex;
    gap: 4px;
}
.tools button {
    display: flex;
    align-items: center;
    justify-content: center;
    width: 13px;
    height: 13px;
    border-radius: 50%;
    background: #fff;
    box-shadow: 0 0 3px rgba(0, 0, 0, 0.3);
}
.tools .del {
    color: #f05555;
}
.upload {
    display: flex;
    align-items: center;
    justify-content: center;
    width: 37px;
    height: 15px;
    border: 1px solid #e3e5e8;
}
.corner {
    position: absolute;
    right: 0;
    top: 0;
    width: 21px;
    height: 20px;
    padding: 3px 0 0 11px;
    color: #999;
    background: linear-gradient(to top right, #fff 50%, #f4f5f7 50%);
}
.canvas .scroll {
    right: 1px;
    top: 21px;
    height: 224px;
}
.who {
    display: flex;
    align-items: center;
    gap: 4px;
    height: 15px;
    margin-bottom: 5px;
    padding: 0 2px 0 5px;
    background: #eff1f4;
}
.who .swap {
    margin-left: auto;
    color: #2a80f0;
}
.title-prop {
    height: 45px;
    padding: 6px 6px 0 5px;
    background: #f7f8f9;
}
.line {
    display: flex;
    align-items: center;
    justify-content: space-between;
    font-weight: bold;
}
.line small {
    margin: 0 6px 0 auto;
    font-size: 6px;
    font-weight: normal;
    color: #a8acb3;
}
.toggle {
    position: relative;
    width: 15px;
    height: 7px;
    border-radius: 4px;
    background: #c0c4cc;
}
.toggle::after {
    content: "";
    position: absolute;
    left: -1px;
    top: -1px;
    width: 9px;
    height: 9px;
    border-radius: 50%;
    background: #fff;
    box-shadow: 0 0 2px rgba(0, 0, 0, 0.4);
}
.toggle:checked {
    background: #8dbcf7;
}
.toggle:checked::after {
    left: 7px;
    background: #1f74ea;
    box-shadow: none;
}
.title-prop > input {
    display: block;
    width: calc(100% - 10px);
    height: 15px;
    margin: 9px 5px 0;
    padding: 0 3px;
    border: 1px solid #80b8f8;
    border-radius: 2px;
    background: #fff;
}
.prop-list {
    padding: 4px 6px 0 5px;
}
.prop-list > label, .prop-list h5 {
    display: block;
    font-size: 7px;
    font-weight: bold;
}
.selectbox, .fxbox, .numbox {
    display: flex;
    align-items: center;
    height: 16px;
    border: 1px solid #e6e8eb;
    font-size: 6px;
}
.selectbox {
    margin: 11px 0 4px;
    padding: 0 5px;
    border-radius: 2px;
}
.selectbox select, .fxbox input, .numbox input {
    flex: 1;
}
.selectbox svg {
    color: #bbb;
}
.fxbox {
    margin-bottom: 6px;
    padding: 0 2px;
}
.fxbox b {
    font-size: 8px;
    font-weight: normal;
    color: #333;
}
::placeholder {
    color: #a8acb3;
    opacity: 1;
}
.numbox {
    margin: 11px 0 7px;
    padding-left: 3px;
}
.numbox span {
    display: flex;
    flex-direction: column;
    width: 10px;
    height: 14px;
    background: #f3f4f6;
    border-left: 1px solid #e6e8eb;
    font-size: 4px;
    line-height: 7px;
    text-align: center;
}
.checks {
    display: flex;
    gap: 7px;
    margin: 15px 0 9px;
}
.checks label {
    display: flex;
    align-items: center;
    gap: 4px;
    width: 28px;
    white-space: nowrap;
}
.checks input {
    flex: none;
    width: 7px;
    height: 7px;
    border: 1px solid #e0e3e8;
}
.checks input:checked {
    background: #edf2fa;
}
.checks input:checked::after {
    content: "";
    display: block;
    width: 4px;
    height: 2px;
    margin: 1px 0 0 1px;
    border: solid #aab4c4;
    border-width: 0 0 1px 1px;
    rotate: -45deg;
}
.checks .off {
    color: #9aa1ab;
}

/* flow designer */
.flow-designer {
    font-size: 5px;
    line-height: 8px;
}
.flow-designer .tabbar {
    height: 14px;
    padding-left: 6px;
    gap: 4px;
}
.flow-designer .tab {
    height: 12px;
}
.flow-designer .tab.active {
    gap: 1px;
    padding: 0 3px;
    font-weight: 500;
}
.flow-designer .tab i {
    margin-left: 1px;
}
.modes {
    display: flex;
    justify-content: flex-end;
    gap: 4px;
    height: 17px;
    padding-right: 77px;
    border-bottom: 1px solid #bbb;
    font-size: 6px;
    line-height: 16px;
}
.modes a {
    width: 16px;
    height: 16px;
    text-align: center;
}
.modes .on {
    color: #1f78d8;
    font-weight: bold;
    border-bottom: 1px solid #1f78d8;
}
.toolbar {
    display: flex;
    height: 14px;
    padding: 2px 0;
    background: #f1f1f1;
    border-bottom: 1px solid #c4c4c4;
    color: #aaa;
    line-height: 9px;
}
.toolbar div {
    display: flex;
    align-items: center;
    justify-content: space-evenly;
    border-right: 1px solid #e0e0e0;
}
.toolbar div:last-child {
    padding-left: 3px;
    border: 0;
}
.toolbar svg {
    width: 7px;
    height: 7px;
}
.toolbar .dark {
    color: #333;
}
.toolbar i {
    font-size: 3px;
}
.g22 { width: 23px; }
.g27 { width: 27px; }
.g30 { width: 30px; }
.g32 { width: 32px; }
.g42 { width: 43px; }
.g44 { width: 44px; }
.g59 { width: 59px; }
.stage {
    display: flex;
    height: 262px;
}
.palette {
    width: 61px;
    background: #fcfcfc;
    border-right: 1px solid #c8c8c8;
}
.palette h4 {
    height: 12px;
    padding-left: 3px;
    line-height: 11px;
    font-size: 5px;
    font-weight: 500;
    color: #333;
    background: #f3f3f3;
    border-bottom: 1px solid #ddd;
}
.palette h4::before {
    content: "▾";
    margin-right: 2px;
    font-size: 4px;
}
.palette .lanes {
    border-bottom: 1px solid #ddd;
}
.paper-area {
    flex: 1;
    padding: 22px 0 0 23px;
    background: #f0f0f0;
    overflow: hidden;
}
.labels {
    font-size: 5px;
    text-anchor: middle;
    fill: #222;
}

/* chart designer */
.chart-designer {
    font-size: 6px;
    line-height: 8px;
    border-top: 1px solid #aaa;
}
.chart-designer > header {
    position: relative;
    display: flex;
    align-items: center;
    height: 26px;
    padding: 0 17px 0 7px;
    box-shadow: 0 1px 3px rgba(0, 0, 0, 0.15);
}
.chart-designer .ico10 {
    margin: 0 9px 0 6px;
}
.chart-designer .name {
    width: 78px;
    height: 12px;
    line-height: 11px;
    border-bottom: 1px dotted #ccc;
}
.chart-designer nav {
    display: flex;
    gap: 13px;
    margin-left: auto;
    font-size: 7px;
    line-height: 25px;
}
.chart-designer nav a {
    display: flex;
    flex-direction: column;
    align-items: center;
    height: 26px;
}
.chart-designer nav .on {
    position: relative;
    color: #2559e6;
    font-weight: bold;
}
.chart-designer nav .on::after {
    content: "";
    position: absolute;
    bottom: 0;
    width: 13px;
    height: 2px;
    background: #2559e6;
}
.chart-body {
    height: 280px;
    padding: 6px 0 0 6px;
    background: #f0f3f7;
}
.chart-name {
    display: flex;
    align-items: center;
    height: 18px;
    padding-left: 5px;
    background: #fff;
    color: #b8bcc2;
    font-size: 5px;
}
.chart-name span {
    width: 92px;
    color: #c6cad0;
}
.chart-cols {
    display: flex;
    height: 256px;
    color: #c0c4ca;
    background: linear-gradient(#f8f9fb 4px, #f0f3f7 4px);
}
.source {
    display: flex;
    flex-direction: column;
    width: 115px;
    margin-right: 4px;
    background: #fff;
}
.src-head {
    height: 20px;
    padding-right: 5px;
    line-height: 26px;
    text-align: right;
    color: #a0c4f8;
    background: #f9fafb;
}
.src-field {
    display: flex;
    align-items: center;
    justify-content: space-between;
    height: 17px;
    padding: 0 5px 0 6px;
    font-size: 5px;
}
.source p {
    text-align: center;
    color: #cdd1d6;
}
.src-foot {
    margin-top: auto;
    padding: 0 6px;
    height: 10px;
    font-size: 5px;
    line-height: 9px;
    border-top: 1px solid #f5f5f5;
}
.dims {
    flex: 1;
    padding-top: 4px;
}
.dims div {
    display: flex;
    align-items: center;
    height: 18px;
    padding-left: 8px;
    background: #fff;
    border-bottom: 1px solid #f4f5f6;
    font-size: 5px;
    color: #d6d9dd;
}
.dims b {
    width: 27px;
    font-size: 6px;
    font-weight: normal;
    color: #a3a9b2;
}
.dialog {
    position: absolute;
    left: 95px;
    right: 0;
    top: 97px;
    bottom: 0;
    padding: 6px 0 0 7px;
    background: #fff;
    box-shadow: 0 0 5px rgba(0, 0, 0, 0.2);
}
.dialog h3 {
    padding-left: 4px;
    font-size: 7px;
    font-weight: normal;
    color: #333;
}
.inner {
    position: relative;
    height: 196px;
    border-left: 1px solid #f0f1f3;
}
.src-tabs {
    display: flex;
    height: 19px;
    border-bottom: 1px solid #f0f1f3;
}
.src-tabs button {
    width: 40px;
    border: solid #f0f1f3;
    border-width: 1px 1px 0 0;
}
.src-tabs .wide {
    width: 50px;
}
.src-tabs .on {
    background: #2178f0;
    color: #fff;
}
.dialog label {
    display: block;
    margin: 6px 0 2px 2px;
    font-weight: bold;
}
.dialog label i {
    margin-right: 3px;
    color: #f05555;
}
.dialog .pick {
    display: block;
    width: calc(100% - 6px);
    height: 13px;
    margin: 0 0 20px 6px;
    padding-left: 4px;
    border: 1px solid #8ab8f5;
    border-right: 0;
    font-size: 5px;
}
.filter {
    display: flex;
    align-items: center;
    height: 36px;
    margin-left: 6px;
    padding: 0 0 8px 10px;
    background: #f9f9f9;
    font-size: 5px;
}
.filter select, .filter input {
    height: 12px;
    background: #fff;
    border: 1px solid #eee;
}
.filter select {
    width: 239px;
}
.filter svg {
    margin: 0 8px 0 -8px;
    color: #ccc;
}
.filter input {
    flex: 1;
    margin-right: -1px;
    padding-left: 4px;
}
.or {
    display: flex;
    align-items: center;
    gap: 9px;
    height: 14px;
    margin-left: 234px;
    color: #aaa;
}
.or::before, .or::after {
    content: "";
    flex: 1;
    border-top: 1px solid #eee;
}
.cascade {
    position: absolute;
    left: 6px;
    top: 53px;
    display: flex;
    height: 96px;
    padding-bottom: 1px;
    background: #fff;
    box-shadow: 0 0 3px rgba(0, 0, 0, 0.25);
    font-size: 5px;
}
.cascade::before {
    content: "";
    position: absolute;
    left: 14px;
    top: -2px;
    width: 5px;
    height: 5px;
    rotate: 45deg;
    background: #fff;
}
.cascade ul {
    width: 79px;
    padding: 3px 5px 0 10px;
    border-right: 1px solid #eee;
}
.cascade .last {
    padding-left: 15px;
    border: 0;
}
.cascade li {
    display: flex;
    align-items: center;
    gap: 3px;
    height: 13px;
}
.cascade .ico5 {
    margin-left: auto;
}
.cascade .on {
    color: #2a80f0;
}

/* runtime */
.runtime {
    font-size: 4px;
    line-height: 6px;
}
.runtime button {
    display: flex;
    align-items: center;
    justify-content: center;
}
.runtime > header {
    position: relative;
    display: flex;
    align-items: center;
    gap: 4px;
    height: 15px;
    padding: 0 4px 0 6px;
    box-shadow: 0 1px 2px rgba(0, 0, 0, 0.1);
}
.runtime > header .ico7 {
    margin-right: 2px;
}
.runtime > header a {
    display: flex;
    gap: 1px;
    margin: 0 2px 0 auto;
}
.runtime > header button {
    width: 22px;
    height: 9px;
    margin-right: 14px;
    background: #fa8c16;
    color: #fff;
}
.run-body {
    display: flex;
    height: 292px;
}
.menu {
    width: 75px;
    padding: 4px 5px;
    background: #f6f8fd;
}
.find {
    display: flex;
    align-items: center;
    gap: 3px;
    height: 9px;
    margin-bottom: 2px;
    padding-right: 1px;
}
.find div {
    display: flex;
    align-items: center;
    flex: 1;
    height: 9px;
    gap: 1px;
    margin-left: 5px;
    padding-left: 1px;
    background: #fff;
}
.find input {
    width: 22px;
}
.find button {
    gap: 2px;
    width: 19px;
    height: 9px;
    background: #1f5fe8;
    color: #fff;
    font-weight: bold;
}
.menu li {
    display: flex;
    align-items: center;
    gap: 3px;
    height: 12px;
    margin-bottom: 1px;
    padding: 0 4px 0 11px;
}
.menu li:nth-child(3n) {
    margin-bottom: 0;
}
.menu li.group {
    padding-left: 7px;
}
.menu li.on {
    background: #e5edfc;
    color: #3f78e8;
}
.menu i {
    width: 1px;
    height: 1px;
    margin-left: auto;
    background: #3a70d0;
}
.menu .group i {
    margin: 0;
}
.page {
    display: flex;
    flex-direction: column;
    flex: 1;
    min-width: 0;
    padding-left: 5px;
}
.crumbs {
    display: flex;
    align-items: center;
    gap: 5px;
    height: 14px;
    padding-left: 3px;
}
.page-title {
    display: flex;
    align-items: center;
    gap: 3px;
    height: 13px;
    padding-left: 3px;
    font-size: 5px;
    color: #333;
}
.page-title button {
    gap: 2px;
    width: 23px;
    height: 9px;
    border: 1px solid #eee;
    font-size: 4px;
    color: #777;
}
.backdrop {
    flex: 1;
    padding: 11px 41px 0 110px;
    background: linear-gradient(#267ef0 62px, #f0f5ff 62px);
    overflow: hidden;
}
.sheet {
    height: 260px;
    padding: 6px;
    background: #fff;
}
.sheet h2 {
    height: 20px;
    line-height: 20px;
    font-size: 7px;
    text-align: center;
    background: #f0f5ff;
}
.serial {
    margin: 4px 36px 8px;
    text-align: right;
}
.user {
    display: flex;
    align-items: center;
    gap: 4px;
    height: 29px;
    margin-bottom: 6px;
    padding-left: 4px;
    box-shadow: 0 0 2px rgba(0, 0, 0, 0.2);
    line-height: 7px;
}
.avatar {
    width: 20px;
    height: 20px;
    border-radius: 50%;
    background: #2f95e8;
    color: #fff;
    font-size: 5px;
    line-height: 20px;
    text-align: center;
}
.user b {
    font-size: 5px;
    font-weight: 500;
}
.user .dim {
    color: #888;
}
.sheet h3 {
    display: flex;
    height: 10px;
    border-bottom: 1px solid #e4ecf8;
    font-size: 6px;
    line-height: 9px;
}
.sheet h3 span {
    height: 9px;
    margin-left: -1px;
    padding: 0 4px;
    background: #2178f0;
    color: #fff;
    clip-path: polygon(3px 0, 100% 0, calc(100% - 3px) 100%, 0 100%);
}
.rows {
    display: grid;
    grid-template-columns: 37px 1fr 38px 1fr;
    grid-template-rows: 9px 9px 9px 16px;
    row-gap: 8px;
    align-items: center;
    margin-top: 7px;
}
.rows label {
    padding-left: 4px;
}
.rows label i {
    margin-left: -4px;
    margin-right: 2px;
}
.sheet i {
    color: #f05555;
}
.rows .mid {
    padding-left: 6px;
}
.rows .full {
    grid-column: 2 / 5;
}
.inbox, .rows textarea {
    display: flex;
    align-items: center;
    height: 9px;
    padding: 0 3px;
    border: 1px solid #f0f1f3;
}
.rows textarea {
    height: 16px;
}
.inbox input {
    flex: 1;
}
.rows .full > .ico5 {
    margin-left: 1px;
}
.rows button, .acts button {
    width: 22px;
    height: 9px;
    border: 1px solid #f0f1f3;
}
.sheet .detail {
    margin-top: 5px;
}
.acts {
    display: flex;
    gap: 3px;
    margin: 7px 2px 3px;
}
.acts .wide {
    width: 28px;
}
.sheet table {
    width: 100%;
    table-layout: fixed;
    border-collapse: collapse;
    text-align: center;
}
.sheet th {
    height: 8px;
    padding: 0 0 0 4px;
    background: #f6f7f9;
    color: #333;
    font-weight: 500;
    text-align: left;
}
.sheet td {
    height: 12px;
    padding: 0;
}
.sheet th input {
    display: block;
    width: 4px;
    height: 4px;
    margin-left: 2px;
    border: 1px solid #ddd;
}
.c1 { width: 5%; }
.c2 { width: 18%; }
.c3 { width: 19%; }
.c4 { width: 12%; }
.c5 { width: 10%; }
.sheet .c6 {
    padding-right: 2px;
    text-align: right;
}
.hscroll {
    width: 87%;
    height: 2px;
    background: #bbb;
}
.sheet h4 {
    margin: 8px 0 5px;
    padding-left: 2px;
    border-left: 1px solid #2178f0;
    font-size: 5px;
    font-weight: 500;
}
.choose {
    display: flex;
    align-items: center;
    height: 7px;
}
.choose i {
    margin-right: 1px;
}
.choose label {
    display: flex;
    align-items: center;
    gap: 2px;
    margin-left: 9px;
    color: #2178f0;
}
.choose input {
    width: 5px;
    height: 5px;
    border: 2px solid #2178f0;
    border-radius: 50%;
}
.opinion {
    display: block;
    width: calc(100% - 2px);
    height: 20px;
    margin: 3px 0 0 2px;
    padding: 0 3px;
    border: 1px solid #f0f1f3;
}
```
